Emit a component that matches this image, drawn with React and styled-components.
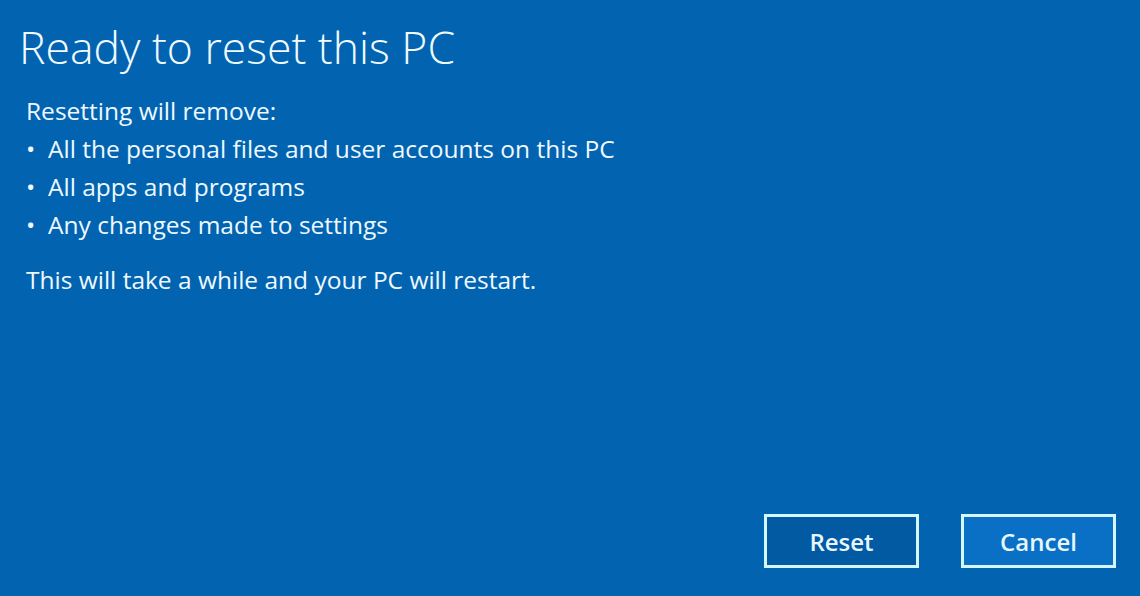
import React from 'react';
import styled, { createGlobalStyle } from 'styled-components';

const GlobalStyle = createGlobalStyle`
  * {
    margin: 0;
    padding: 0;
    box-sizing: border-box;
  }
  html, body {
    width: 100%;
    height: 100%;
    background: #0263b0;
    overflow: hidden;
  }
  body {
    font-family: 'Open Sans', 'Noto Sans', sans-serif;
    color: #eef9ff;
  }
`;

const Screen = styled.div`
  width: 1140px;
  height: 596px;
  display: flex;
  flex-direction: column;
  background: #0263b0;
  padding: 19px 24px 28px 19px;
`;

const Title = styled.h1`
  font-size: 44.5px;
  font-weight: 300;
  line-height: 56px;
  color: #f0fbff;
`;

const Body = styled.div`
  padding: 17px 0 0 7px;
  font-size: 24.5px;
  line-height: 38px;
`;

const BulletList = styled.ul`
  list-style: none;
`;

const Bullet = styled.li`
  display: flex;
  gap: 10px;

  &::before {
    content: '•';
    width: 12px;
  }
`;

const Note = styled.p`
  margin-top: 17px;
`;

const Footer = styled.div`
  margin-top: auto;
  display: flex;
  justify-content: flex-end;
  gap: 42px;
`;

const Button = styled.button`
  width: 155px;
  height: 54px;
  border: 3px solid #d4f6ff;
  background: ${({ $primary }) => ($primary ? '#0a70c6' : '#025aa2')};
  color: #e6f7ff;
  font-family: 'Open Sans', 'Noto Sans', sans-serif;
  font-size: 24px;
  font-weight: 600;
  cursor: pointer;
`;

const items = [
  'All the personal files and user accounts on this PC',
  'All apps and programs',
  'Any changes made to settings',
];

const App = () => (
  <>
    <GlobalStyle />
    <Screen>
      <Title>Ready to reset this PC</Title>
      <Body>
        <p>Resetting will remove:</p>
        <BulletList>
          {items.map((item) => (
            <Bullet key={item}>{item}</Bullet>
          ))}
        </BulletList>
        <Note>This will take a while and your PC will restart.</Note>
      </Body>
      <Footer>
        <Button>Reset</Button>
        <Button $primary>Cancel</Button>
      </Footer>
    </Screen>
  </>
);

export default App;
